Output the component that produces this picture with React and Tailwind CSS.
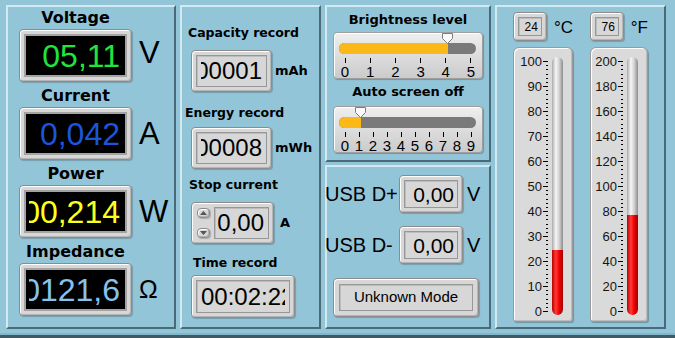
import React from 'react';

const panel =
  'border-2 border-t-[#d3e9f2] border-l-[#d3e9f2] border-r-[#4b6a77] border-b-[#4b6a77]';
const raised =
  'rounded-[4px] border border-[#8c8c8c] bg-[#d7d7d7] shadow-[inset_1px_1px_0_#ffffff,inset_-1px_-1px_0_#b5b5b5,1px_1px_1px_rgba(0,0,0,0.2)]';
const sunken = 'border border-[#979797] bg-[#d7d7d7] shadow-[inset_1px_1px_0_#bdbdbd]';
const bold = "font-['DejaVu_Sans',sans-serif] font-bold text-black";

function Meter({ label, value, color, unit, unitClass }) {
  return (
    <div className="flex flex-col">
      <div className={`ml-[11px] h-[20px] w-[113px] text-center text-[16px] leading-[20px] ${bold}`}>{label}</div>
      <div className="mt-[1px] flex items-start">
        <div className={`ml-[11px] h-[53px] w-[113px] p-[4px] ${raised}`}>
          <div className="h-full border-2 border-[#a3a3a3] bg-black pl-[3px] pr-[5px]">
            <div className="flex h-full items-center justify-end overflow-hidden">
              <span className={`whitespace-nowrap text-[32px] leading-none ${color}`}>{value}</span>
            </div>
          </div>
        </div>
        <span className={`ml-[7px] leading-none text-black ${unitClass}`}>{unit}</span>
      </div>
    </div>
  );
}

function Readout({ value, className, justify = 'justify-end', text = 'text-[24px]', pad = 'px-[4px]' }) {
  return (
    <div className={`p-[4px] ${raised} ${className}`}>
      <div className={`h-full ${sunken} ${pad}`}>
        <div className={`flex h-full items-center overflow-hidden ${justify}`}>
          <span className={`whitespace-nowrap leading-none text-black ${text}`}>{value}</span>
        </div>
      </div>
    </div>
  );
}

function Arrow({ up }) {
  return (
    <div className={`flex h-[10px] w-[13px] items-center justify-center ${raised} rounded-[2px]`}>
      <svg width="7" height="4" viewBox="0 0 7 4">
        <polygon points={up ? '3.5,0 7,4 0,4' : '0,0 7,0 3.5,4'} fill="#555" />
      </svg>
    </div>
  );
}

function Slider({ labels, fillClass, thumbClass }) {
  return (
    <div className="relative h-[47px] w-[150px] rounded-[4px] border border-[#9e9e9e] bg-[linear-gradient(#efefef,#cbcbcb)] shadow-[inset_1px_1px_0_#ffffff,1px_1px_1px_rgba(0,0,0,0.25)]">
      <div className="ml-[5px] mt-[10px] h-[11px] w-[137px] overflow-hidden rounded-full bg-[#7a7a7a]">
        <div className={`h-full bg-[#fbb817] ${fillClass}`} />
      </div>
      <svg className={`absolute top-0 ${thumbClass}`} width="11" height="11" viewBox="0 0 11 11">
        <polygon points="0.5,0.5 10.5,0.5 10.5,5.5 5.5,10.5 0.5,5.5" fill="#fafafa" stroke="#7c7c7c" />
      </svg>
      <div className="ml-[4px] mt-[4px] flex w-[140px] justify-between">
        {labels.map((l) => (
          <div key={l} className="flex w-[14px] flex-col items-center">
            <div className="h-[5px] w-px bg-black" />
            <div className="mt-[2px] text-[15px] leading-[13px] text-black">{l}</div>
          </div>
        ))}
      </div>
    </div>
  );
}

function Ticks() {
  const marks = [];
  for (let i = 0; i < 11; i++) {
    const y = 12 + i * 25;
    marks.push(<rect key={`M${i}`} x="1" y={y} width="5" height="1" fill="#000" />);
    if (i < 10) {
      for (let k = 1; k < 6; k++) {
        marks.push(<rect key={`m${i}-${k}`} x="4" y={Math.round(y + (k * 25) / 6)} width="2" height="1" fill="#000" />);
      }
    }
  }
  return (
    <svg className="mt-[1px] shrink-0" width="7" height="275">
      {marks}
    </svg>
  );
}

function Thermo({ labels, widthClass, labelClass, fillClass }) {
  return (
    <div
      className={`mt-[6px] flex h-[275px] ${widthClass} rounded-b-[3px] rounded-t-[6px] border border-[#9a9a9a] bg-[#dadada] shadow-[inset_1px_1px_0_#ffffff,inset_-1px_-1px_0_#bcbcbc,1px_1px_1px_rgba(0,0,0,0.25)]`}
    >
      <div className={`mt-[1px] flex shrink-0 flex-col ${labelClass}`}>
        {labels.map((l) => (
          <div key={l} className="h-[25px] shrink-0 text-right text-[13px] leading-[25px] text-[#151515]">
            {l}
          </div>
        ))}
      </div>
      <Ticks />
      <div className="ml-[3px] mt-[9px] flex h-[258px] w-[11px] shrink-0 flex-col justify-end overflow-hidden rounded-full bg-[linear-gradient(to_right,#a9a9a9,#f6f6f6_35%,#d2d2d2_65%,#8d8d8d)]">
        <div className={`w-full rounded-b-full bg-[linear-gradient(to_right,#b80000,#ff3a3a_35%,#f00000_65%,#a00000)] ${fillClass}`} />
      </div>
    </div>
  );
}

export default function App() {
  return (
    <div className="h-[338px] w-[675px] overflow-hidden bg-[#93c5d9] font-['Liberation_Sans',Arial,sans-serif]">
      <div className="flex h-[329px] gap-[4px] pl-[6px] pt-[5px]">
        {/* meters */}
        <div className={`flex h-full w-[170px] flex-col gap-[4px] pt-[1px] ${panel}`}>
          <Meter label="Voltage" value="05,11" color="text-[#1fe53c]" unit="V" unitClass="mt-[8px] text-[31px]" />
          <Meter label="Current" value="0,042" color="text-[#1a55dc]" unit="A" unitClass="mt-[11px] text-[31px]" />
          <Meter label="Power" value="00,214" color="text-[#ffff1e]" unit="W" unitClass="mt-[11px] text-[31px]" />
          <Meter label="Impedance" value="0121,6" color="text-[#86c2ea]" unit="Ω" unitClass="mt-[14px] text-[25px]" />
        </div>

        {/* records */}
        <div className={`flex h-full w-[141px] flex-col ${panel}`}>
          <div className={`ml-[6px] mt-[18px] h-[16px] text-[12.5px] leading-[16px] ${bold}`}>Capacity record</div>
          <div className="ml-[9px] mt-[9px] flex items-center">
            <Readout value="00001" className="h-[42px] w-[81px]" />
            <span className={`ml-[3px] text-[13px] ${bold}`}>mAh</span>
          </div>
          <div className={`ml-[3px] mt-[13px] h-[16px] text-[12.5px] leading-[16px] ${bold}`}>Energy record</div>
          <div className="ml-[9px] mt-[6px] flex items-center">
            <Readout value="00008" className="h-[42px] w-[81px]" />
            <span className={`ml-[3px] text-[13px] ${bold}`}>mWh</span>
          </div>
          <div className={`ml-[7px] mt-[8px] h-[16px] text-[12.5px] leading-[16px] ${bold}`}>Stop current</div>
          <div className="ml-[9px] mt-[9px] flex items-center">
            <div className={`flex h-[42px] w-[83px] p-[4px] ${raised}`}>
              <div className="ml-[1px] flex flex-col justify-between py-[1px]">
                <Arrow up />
                <Arrow />
              </div>
              <div className={`ml-[4px] flex flex-1 items-center justify-end pr-[4px] ${sunken}`}>
                <span className="text-[24px] leading-none text-black">0,00</span>
              </div>
            </div>
            <span className={`ml-[6px] text-[13px] ${bold}`}>A</span>
          </div>
          <div className={`ml-[11px] mt-[11px] h-[16px] text-[12.5px] leading-[16px] ${bold}`}>Time record</div>
          <div className="ml-[9px] mt-[4px] flex">
            <Readout value="00:02:22" className="h-[43px] w-[104px]" justify="justify-start" />
          </div>
        </div>

        {/* settings + usb */}
        <div className="flex h-full w-[166px] flex-col gap-[3px]">
          <div className={`flex h-[157px] flex-col items-center ${panel}`}>
            <div className={`mt-[5px] h-[16px] text-[13px] leading-[16px] ${bold}`}>Brightness level</div>
            <div className="mt-[4px]">
              <Slider labels={[0, 1, 2, 3, 4, 5]} fillClass="w-[109px]" thumbClass="left-[108px]" />
            </div>
            <div className={`mt-[5px] h-[16px] text-[13px] leading-[16px] ${bold}`}>Auto screen off</div>
            <div className="mt-[6px]">
              <Slider labels={[0, 1, 2, 3, 4, 5, 6, 7, 8, 9]} fillClass="w-[22px]" thumbClass="left-[21px]" />
            </div>
          </div>
          <div className={`flex flex-1 flex-col ${panel}`}>
            <div className="-ml-[2px] mt-[8px] flex items-center">
              <span className="w-[74px] whitespace-nowrap text-[20px] text-black">USB D+</span>
              <Readout value="0,00" className="h-[38px] w-[64px]" text="text-[21px]" pad="px-[3px]" />
              <span className="ml-[4px] text-[20px] text-black">V</span>
            </div>
            <div className="-ml-[2px] mt-[13px] flex items-center">
              <span className="w-[74px] whitespace-nowrap text-[20px] text-black">USB D-</span>
              <Readout value="0,00" className="h-[38px] w-[64px]" text="text-[21px]" pad="px-[3px]" />
              <span className="ml-[4px] text-[20px] text-black">V</span>
            </div>
            <div className={`ml-[6px] mt-[14px] h-[39px] w-[146px] p-[5px] ${raised}`}>
              <div className={`flex h-full items-center justify-center ${sunken}`}>
                <span className="text-[15px] text-black">Unknown Mode</span>
              </div>
            </div>
          </div>
        </div>

        {/* thermometers */}
        <div className={`flex h-full w-[171px] pl-[16px] pt-[5px] ${panel}`}>
          <div className="flex w-[60px] flex-col">
            <div className="flex items-center">
              <Readout value="24" className="h-[29px] w-[42px]" text="text-[12px]" pad="px-[3px]" />
              <span className="ml-[7px] mt-[3px] text-[17px] text-black">°C</span>
            </div>
            <Thermo
              labels={[100, 90, 80, 70, 60, 50, 40, 30, 20, 10, 0]}
              widthClass="w-[60px]"
              labelClass="w-[28px]"
              fillClass="h-[65px]"
            />
          </div>
          <div className="ml-[17px] flex w-[58px] flex-col">
            <div className="flex items-center">
              <Readout value="76" className="h-[29px] w-[41px]" text="text-[12px]" pad="px-[3px]" />
              <span className="ml-[7px] mt-[3px] text-[17px] text-black">°F</span>
            </div>
            <Thermo
              labels={[200, 180, 160, 140, 120, 100, 80, 60, 40, 20, 0]}
              widthClass="w-[58px]"
              labelClass="w-[26px]"
              fillClass="h-[100px]"
            />
          </div>
        </div>
      </div>
      <div className="mt-[4px] h-[2px] bg-[#84b6ca]" />
      <div className="h-[3px] bg-[#3f5965]" />
    </div>
  );
}
